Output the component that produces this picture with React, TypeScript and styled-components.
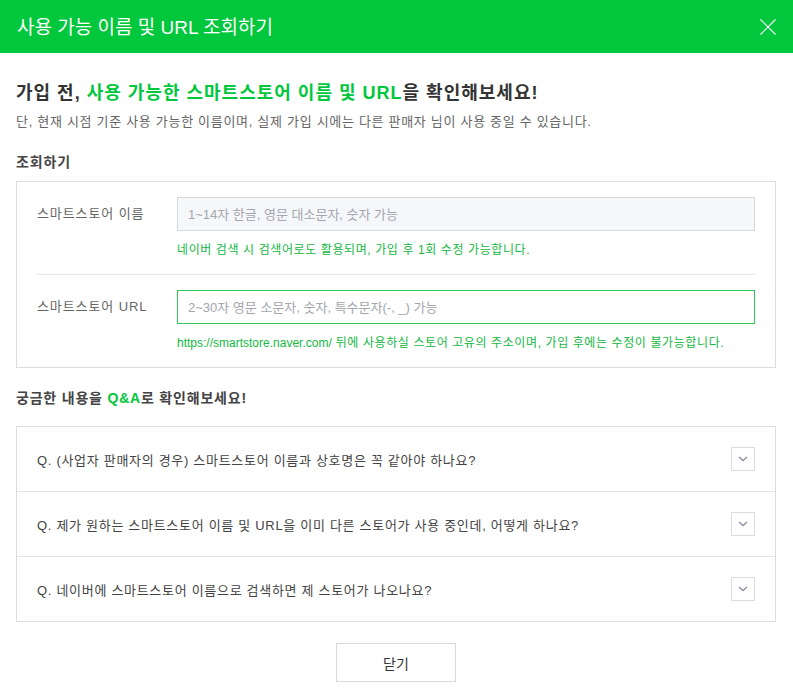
import React from 'react'
import styled, { createGlobalStyle } from 'styled-components'

const GlobalStyle = createGlobalStyle`
  * { box-sizing: border-box; }
  body {
    margin: 0;
    background: #fff;
    font-family: "Liberation Sans", "Noto Sans CJK KR", sans-serif;
    color: #333;
  }
`

const GREEN = '#00c73c'

interface FieldType {
  label: string
  placeholder: string
  url?: string
  help: string
  active?: boolean
}

const fields: FieldType[] = [
  {
    label: '스마트스토어 이름',
    placeholder: '1~14자 한글, 영문 대소문자, 숫자 가능',
    help: '네이버 검색 시 검색어로도 활용되며, 가입 후 1회 수정 가능합니다.',
  },
  {
    label: '스마트스토어 URL',
    placeholder: '2~30자 영문 소문자, 숫자, 특수문자(-, _) 가능',
    url: 'https://smartstore.naver.com/',
    help: ' 뒤에 사용하실 스토어 고유의 주소이며, 가입 후에는 수정이 불가능합니다.',
    active: true,
  },
]

const questions = [
  'Q. (사업자 판매자의 경우) 스마트스토어 이름과 상호명은 꼭 같아야 하나요?',
  'Q. 제가 원하는 스마트스토어 이름 및 URL을 이미 다른 스토어가 사용 중인데, 어떻게 하나요?',
  'Q. 네이버에 스마트스토어 이름으로 검색하면 제 스토어가 나오나요?',
]

const App = () => {
  return (
    <Modal>
      <GlobalStyle />
      <Header>
        <HeaderTitle>사용 가능 이름 및 URL 조회하기</HeaderTitle>
        <CloseIcon aria-label="닫기">
          <svg width="16" height="16" viewBox="0 0 16 16">
            <path d="M0.5 0.5 L15.5 15.5 M15.5 0.5 L0.5 15.5" stroke="#fff" strokeWidth="1.1" fill="none" />
          </svg>
        </CloseIcon>
      </Header>
      <Body>
        <Headline>
          가입 전, <Green>사용 가능한 스마트스토어 이름 및 URL</Green>을 확인해보세요!
        </Headline>
        <Descr>단, 현재 시점 기준 사용 가능한 이름이며, 실제 가입 시에는 다른 판매자 님이 사용 중일 수 있습니다.</Descr>

        <SectionTitle>조회하기</SectionTitle>
        <Box>
          {fields.map((f, i) => (
            <FieldRow key={f.label} $first={i === 0}>
              <Label>{f.label}</Label>
              <FieldBody>
                <Input placeholder={f.placeholder} $active={f.active} autoFocus={f.active} />
                <Help>
                  {f.url && <Latin>{f.url}</Latin>}
                  {f.help}
                </Help>
              </FieldBody>
            </FieldRow>
          ))}
        </Box>

        <QnaTitle>
          궁금한 내용을 <Green>Q&amp;A</Green>로 확인해보세요!
        </QnaTitle>
        <QnaList>
          {questions.map((q) => (
            <QnaItem key={q}>
              <Question>{q}</Question>
              <Toggle>
                <svg width="10" height="6" viewBox="0 0 10 6">
                  <path d="M1 1 L5 4.5 L9 1" stroke="#8b90a8" strokeWidth="1.4" fill="none" />
                </svg>
              </Toggle>
            </QnaItem>
          ))}
        </QnaList>

        <Footer>
          <CloseButton>닫기</CloseButton>
        </Footer>
      </Body>
    </Modal>
  )
}

export default App

const Modal = styled.div`
  width: 793px;
  height: 696px;
  background: #fff;
`

const Header = styled.div`
  height: 53px;
  background: ${GREEN};
  display: flex;
  align-items: center;
  justify-content: space-between;
  padding: 0 17px 0 17px;
`

const HeaderTitle = styled.h1`
  margin: 0;
  font-size: 19px;
  font-weight: 400;
  color: #fff;
  letter-spacing: 0;
  margin-top: -3px;
`

const CloseIcon = styled.button`
  width: 16px;
  height: 16px;
  padding: 0;
  border: 0;
  background: none;
  display: flex;
`

const Body = styled.div`
  padding: 28px 17px 0 16px;
`

const Headline = styled.h2`
  margin: 0;
  font-size: 18px;
  font-weight: 700;
  line-height: 24px;
  color: #333;
  letter-spacing: 1px;
`

const Green = styled.span`
  color: ${GREEN};
`

const Latin = styled.span`
  letter-spacing: 0;
`

const Descr = styled.p`
  margin: 8px 0 0;
  font-size: 13px;
  line-height: 18px;
  color: #666;
  letter-spacing: 0.7px;
`

const SectionTitle = styled.h3`
  margin: 22px 0 0;
  font-size: 14px;
  line-height: 18px;
  font-weight: 700;
  color: #444;
  letter-spacing: 0.9px;
`

const Box = styled.div`
  margin-top: 10px;
  border: 1px solid #dcdde1;
  padding: 0 20px;
`

const FieldRow = styled.div<{ $first?: boolean }>`
  display: flex;
  padding: 15px 0 15px;
  border-top: ${({ $first }) => ($first ? '0' : '1px solid #e5e6ea')};
`

const Label = styled.div`
  width: 140px;
  flex-shrink: 0;
  font-size: 13px;
  line-height: 34px;
  color: #666;
  letter-spacing: 0.9px;
`

const FieldBody = styled.div`
  flex: 1;
  display: flex;
  flex-direction: column;
`

const Input = styled.input<{ $active?: boolean }>`
  height: 34px;
  width: 100%;
  padding: 0 10px;
  font-family: inherit;
  font-size: 13px;
  color: #333;
  outline: none;
  border: 1px solid ${({ $active }) => ($active ? '#2fc957' : '#d7d9de')};
  background: ${({ $active }) => ($active ? '#fff' : '#f6f7fa')};
  border-radius: 0;
  &::placeholder {
    color: #a3a6ad;
    letter-spacing: 0px;
  }
`

const Help = styled.p`
  margin: 10px 0 0;
  font-size: 12px;
  line-height: 18px;
  color: #12b83f;
  letter-spacing: 0.6px;
`

const QnaTitle = styled.h3`
  margin: 21px 0 0;
  font-size: 14px;
  line-height: 18px;
  font-weight: 700;
  color: #444;
  letter-spacing: 0.8px;
`

const QnaList = styled.div`
  margin-top: 19px;
  border: 1px solid #dcdde1;
`

const QnaItem = styled.div`
  display: flex;
  align-items: center;
  justify-content: space-between;
  height: 65px;
  padding: 0 20px 0 20px;
  border-top: 1px solid #e3e4e9;
  &:first-child {
    border-top: 0;
    height: 64px;
  }
`

const Question = styled.div`
  font-size: 13px;
  color: #444;
  letter-spacing: 0.7px;
`

const Toggle = styled.button`
  width: 24px;
  height: 24px;
  padding: 0;
  border: 1px solid #dcdde1;
  background: #fff;
  display: flex;
  align-items: center;
  justify-content: center;
`

const Footer = styled.div`
  display: flex;
  justify-content: center;
  padding-top: 21px;
`

const CloseButton = styled.button`
  width: 120px;
  height: 39px;
  border: 1px solid #d7d9de;
  background: #fff;
  font-family: inherit;
  font-size: 14px;
  color: #333;
`
